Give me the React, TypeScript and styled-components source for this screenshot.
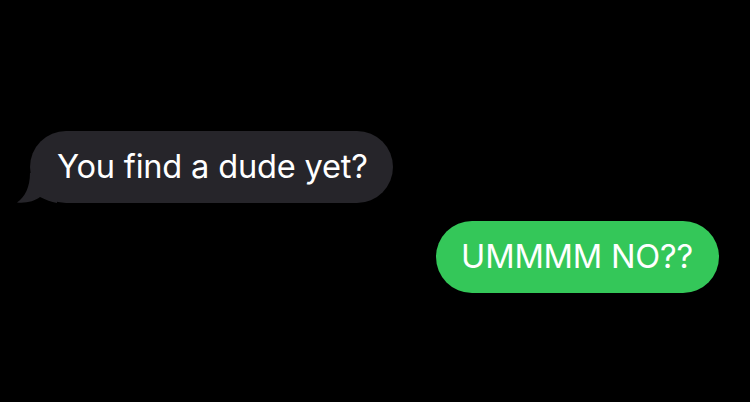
import React from "react";
import styled, { createGlobalStyle } from "styled-components";

const Global = createGlobalStyle`
  html, body { margin: 0; padding: 0; background: #000; }
  body { width: 750px; height: 402px; overflow: hidden; }
`;

const Thread = styled.div`
  display: flex;
  flex-direction: column;
  gap: 18px;
  padding: 131px 31px 0 30px;
  font-family: Inter, "Noto Sans", sans-serif;
`;

const Row = styled.div<{ $out?: boolean }>`
  display: flex;
  justify-content: ${(p) => (p.$out ? "flex-end" : "flex-start")};
`;

const Bubble = styled.div<{ $out?: boolean }>`
  position: relative;
  box-sizing: border-box;
  height: 72px;
  display: flex;
  align-items: center;
  border-radius: 36px;
  padding: 0 ${(p) => (p.$out ? "26px" : "25px")} 2px
    ${(p) => (p.$out ? "25px" : "27px")};
  background: ${(p) => (p.$out ? "#34c759" : "#26252a")};
  color: #fff;
  font-size: 32.6px;
  letter-spacing: -0.2px;
  white-space: nowrap;
`;

const Tail = styled.svg`
  position: absolute;
  left: -13px;
  bottom: 0;
  width: 40px;
  height: 30px;
`;

export default function App() {
  return (
    <>
      <Global />
      <Thread>
        <Row>
          <Bubble>
            <Tail viewBox="0 0 40 30">
              <path
                d="M13 0 C13 14 8 24 0 29.5 C9 30.5 18 28 23 24 C29 27 34 29 40 30 L40 0 Z"
                fill="#26252a"
              />
            </Tail>
            You find a dude yet?
          </Bubble>
        </Row>
        <Row $out>
          <Bubble $out>UMMMM NO??</Bubble>
        </Row>
      </Thread>
    </>
  );
}
